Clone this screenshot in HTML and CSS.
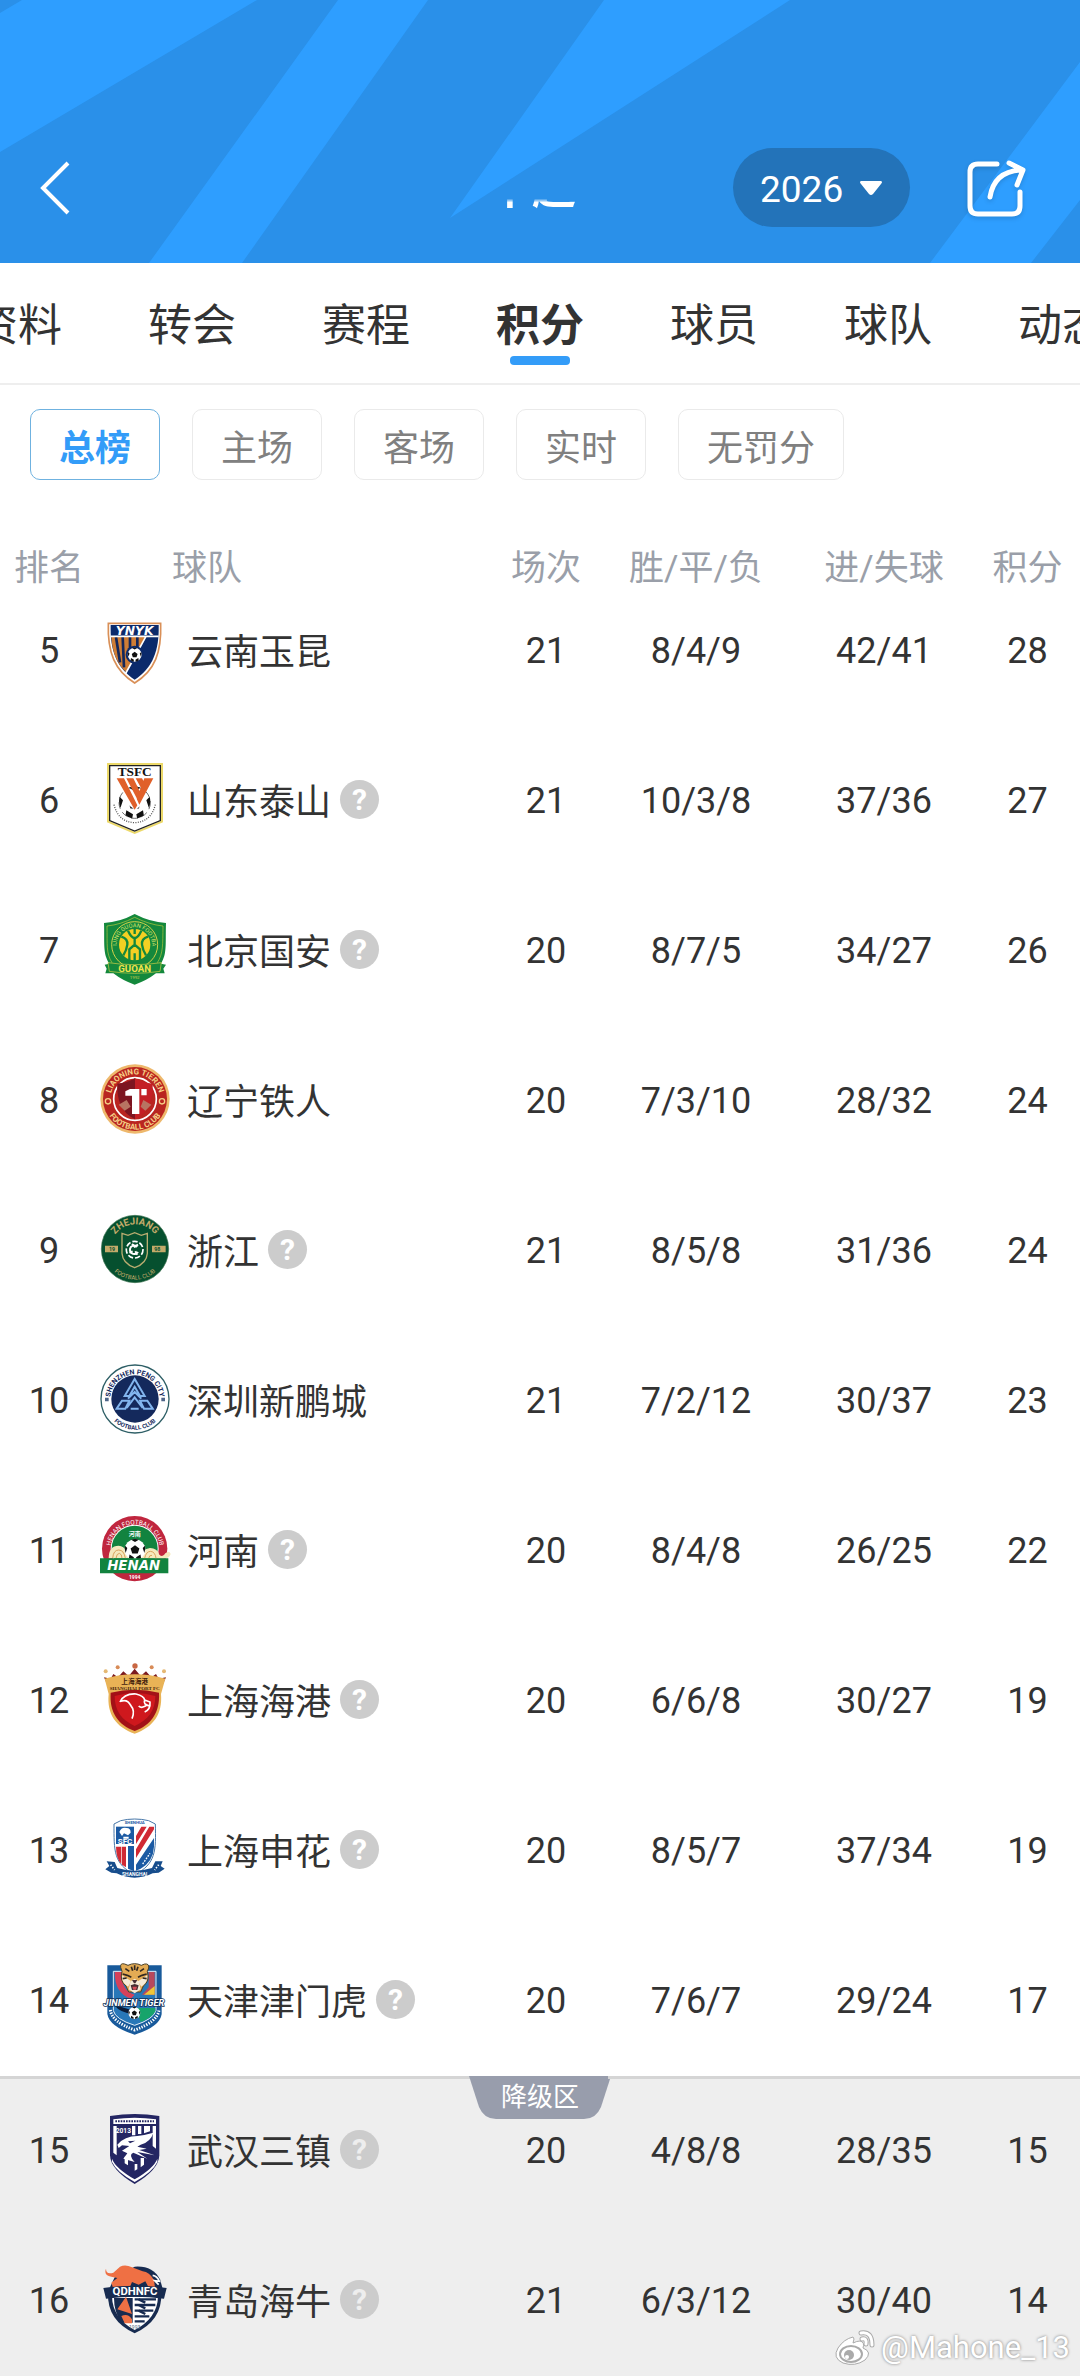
FILE: index.html
```html
<!DOCTYPE html>
<html lang="zh-CN">
<head>
    <meta charset="UTF-8">
    <meta name="viewport" content="width=device-width, initial-scale=1">
    <title>中超 积分</title>
    <link rel="stylesheet" href="styles.css">
</head>
<body>
    <!-- shared shapes for the club crests -->
    <svg class="defs" width="0" height="0" aria-hidden="true">
        <defs>
            <path id="arc-up" d="M31 105A74 74 0 0 1 179 105"/>
            <path id="arc-down" d="M13 105A92 92 0 0 0 197 105"/>
            <path id="arc-small" d="M50 93A53 53 0 1 1 156 93"/>
            <symbol id="ball" viewBox="0 0 40 40">
                <circle cx="20" cy="20" r="19" fill="#fff"/>
                <path fill="#111" d="M20 12l8 6-3 9H15l-3-9zM13 2l7 4 7-4a19 19 0 0 0-14 0zM2 13l4 4-3 9a19 19 0 0 1-1-13zM38 13l-4 4 3 9a19 19 0 0 0 1-13zM9 35l1-6 8 5-1 5a19 19 0 0 1-8-4zM31 35l-1-6-8 5 1 5a19 19 0 0 0 8-4z"/>
            </symbol>
        </defs>
    </svg>

    <header class="header">
        <svg class="header-bg" viewBox="0 0 1080 263" preserveAspectRatio="none" aria-hidden="true">
            <path d="M22 0H257L0 152V13zM338 0H428L242 263H149zM604 0H790L450 218zM1080 62V200L1031 263H930z"/>
        </svg>
        <a class="back" href="#" aria-label="返回">
            <svg width="32" height="56" viewBox="0 0 32 56"><path d="M30 3L5 28L30 53"/></svg>
        </a>
        <h1 class="title">中超</h1>
        <div class="header-right">
            <label class="season">
                <select aria-label="赛季">
                    <option>2026</option>
                </select>
                <svg width="24" height="16" viewBox="0 0 24 16"><path d="M2 1H22Q24 2 22 4L14 14Q12 16 10 14L2 4Q0 2 2 1z"/></svg>
            </label>
            <button class="share" type="button" aria-label="分享">
                <svg width="60" height="60" viewBox="0 0 60 60">
                    <path d="M31 6H12Q4 6 4 14V48Q4 56 12 56H46Q54 56 54 48V34M24 39Q28 14 54 12M43 5L57 12L51 27"/>
                </svg>
            </button>
        </div>
    </header>

    <nav class="tabs">
        <a href="#">资料</a>
        <a href="#">转会</a>
        <a href="#">赛程</a>
        <a href="#" class="active">积分</a>
        <a href="#">球员</a>
        <a href="#">球队</a>
        <a href="#">动态</a>
    </nav>

    <div class="filters">
        <button type="button" class="chip active">总榜</button>
        <button type="button" class="chip">主场</button>
        <button type="button" class="chip">客场</button>
        <button type="button" class="chip">实时</button>
        <button type="button" class="chip">无罚分</button>
    </div>

    <table class="standings">
        <thead>
            <tr>
                <th class="rank">排名</th>
                <th class="team">球队</th>
                <th class="played">场次</th>
                <th class="record">胜/平/负</th>
                <th class="goals">进/失球</th>
                <th class="points">积分</th>
            </tr>
        </thead>
        <tbody>
            <tr>
                <td>5</td>
                <td><div class="club">
                    <svg class="crest" viewBox="0 0 210 210">
                        <path d="M25 28H182C185 115 165 170 104 207C44 170 22 115 25 28z" fill="#fff" stroke="#d99058" stroke-width="5"/>
                        <path d="M32 33H176C178 110 158 162 104 197C50 162 30 110 32 33z" fill="#0b2a6b"/>
                        <path d="M34 69H136L78 174Q38 138 34 69z" fill="#cf7d35"/>
                        <path d="M48 69L60 145M68 69L72 160M90 69V135M112 69V105" stroke="#14275a" stroke-width="8" fill="none"/>
                        <path d="M32 67H176M138 67L76 180" stroke="#fff" stroke-width="5"/>
                        <text class="wide" x="104" y="62" font-size="37" font-weight="700" font-style="italic" fill="#fff">YNYK</text>
                        <circle cx="104" cy="122" r="27" fill="#0b2a6b"/>
                        <use href="#ball" x="82" y="100" width="44" height="44"/>
                    </svg>
                    <span>云南玉昆</span>
                </div></td>
                <td>21</td><td>8/4/9</td><td>42/41</td><td>28</td>
            </tr>
            <tr>
                <td>6</td>
                <td><div class="club">
                    <svg class="crest" viewBox="0 0 210 210">
                        <path d="M24 0H186V173L104 207L24 173z" fill="#fff" stroke="#ecd96a" stroke-width="6"/>
                        <path d="M29 5H181V170L104 201L29 170z" fill="#fff" stroke="#222" stroke-width="4"/>
                        <text class="serif" x="104" y="36" font-size="40" font-weight="700" fill="#111">TSFC</text>
                        <use href="#ball" x="54" y="66" width="100" height="100"/>
                        <circle cx="104" cy="116" r="47" fill="none" stroke="#222" stroke-width="2" stroke-dasharray="20 12"/>
                        <path d="M104 78L132 118L106 138L78 118z" fill="#fff"/>
                        <path d="M50 43H72L112 124L104 137zM79 43H100L122 88L111 104zM107 43H126L136 62L127 79zM133 43H160L118 122L110 104z" fill="#e0602a"/>
                        <path d="M42 122Q55 174 104 176Q153 174 166 122" fill="none" stroke="#555" stroke-width="4" stroke-dasharray="3 4"/>
                    </svg>
                    <span>山东泰山</span>
                    <button type="button" class="help" aria-label="说明">?</button>
                </div></td>
                <td>21</td><td>10/3/8</td><td>37/36</td><td>27</td>
            </tr>
            <tr>
                <td>7</td>
                <td><div class="club">
                    <svg class="crest" viewBox="0 0 210 210">
                        <path d="M104 0Q150 24 198 27C196 90 202 118 183 149L198 152L190 164L194 178L168 178Q140 200 104 212Q68 200 40 178L16 178L20 164L14 152L28 149C8 118 14 90 12 27Q60 24 104 0z" fill="#14883c"/>
                        <path d="M104 10Q148 32 189 36C188 92 190 118 172 146M36 146C18 118 22 92 21 36Q62 32 104 10" fill="none" stroke="#b9c840" stroke-width="2"/>
                        <circle cx="104" cy="92" r="69" fill="#14883c" stroke="#d2d149" stroke-width="3"/>
                        <circle cx="104" cy="92" r="47" fill="#f4d023"/>
                        <path d="M104 45V60M84 50Q94 72 104 72Q114 72 124 50M104 72V92L88 106V138M104 92L120 106V138M64 68Q84 74 82 92Q80 108 70 124M144 68Q124 74 126 92Q128 108 138 124M104 118V140" fill="none" stroke="#14883c" stroke-width="7"/>
                        <text class="arc" font-size="17" fill="#dbe36a"><textPath href="#arc-small" startOffset="50%">BEIJING GUOAN FOOTBALL</textPath></text>
                        <path d="M24 146Q104 158 184 146L180 172Q104 184 28 172z" fill="#14883c" stroke="#d2d149" stroke-width="2"/>
                        <text x="104" y="173" font-size="29" font-weight="700" fill="#f1e34b">GUOAN</text>
                        <text x="104" y="194" font-size="13" fill="#d2d149">1992</text>
                    </svg>
                    <span>北京国安</span>
                    <button type="button" class="help" aria-label="说明">?</button>
                </div></td>
                <td>20</td><td>8/7/5</td><td>34/27</td><td>26</td>
            </tr>
            <tr>
                <td>8</td>
                <td><div class="club">
                    <svg class="crest" viewBox="0 0 210 210">
                        <circle cx="105" cy="105" r="104" fill="#eeb86c"/>
                        <circle cx="105" cy="105" r="96" fill="#b92520"/>
                        <circle cx="105" cy="105" r="64" fill="#b92520" stroke="#fff" stroke-width="5"/>
                        <path d="M105 43Q132 58 158 59C160 108 146 145 105 166C64 145 50 108 52 59Q80 58 105 43z" fill="#c41f25"/>
                        <path d="M105 43V166C64 145 50 108 52 59Q80 58 105 43z" fill="#7d1520"/>
                        <path d="M56 122L80 108L92 128L74 140zM154 122L130 108L122 128L136 140z" fill="#b87462"/>
                        <path d="M76 82L90 75H118V150H96V95H76zM124 75H140V94H124z" fill="#fff"/>
                        <text class="arc" font-size="24" font-weight="700" fill="#f5cf86"><textPath href="#arc-up" startOffset="50%">LIAONING TIEREN</textPath></text>
                        <text class="arc" font-size="24" font-weight="700" fill="#f5cf86"><textPath href="#arc-down" startOffset="50%">FOOTBALL CLUB</textPath></text>
                        <circle cx="24" cy="112" r="8" fill="none" stroke="#f5cf86" stroke-width="4"/>
                        <circle cx="186" cy="112" r="8" fill="none" stroke="#f5cf86" stroke-width="4"/>
                    </svg>
                    <span>辽宁铁人</span>
                </div></td>
                <td>20</td><td>7/3/10</td><td>28/32</td><td>24</td>
            </tr>
            <tr>
                <td>9</td>
                <td><div class="club">
                    <svg class="crest" viewBox="0 0 210 210">
                        <circle cx="105" cy="105" r="101" fill="#06502f" stroke="#3c7250" stroke-width="2"/>
                        <path d="M15 95H197V115H15z" fill="#c2aa6a"/>
                        <path d="M54 90H156V122H54z" fill="#06502f"/>
                        <path d="M66 58L84 64L104 56L124 64L142 58V118Q140 148 104 161Q68 148 66 118z" fill="#06502f" stroke="#b9ac70" stroke-width="4"/>
                        <circle cx="104" cy="107" r="25" fill="none" stroke="#fff" stroke-width="5" stroke-dasharray="16 6"/>
                        <path d="M112 98A13 13 0 1 0 114 114M96 90L104 98L114 92M88 116L98 112M112 122L106 112" fill="none" stroke="#fff" stroke-width="6"/>
                        <text class="arc" font-size="29" font-weight="700" fill="#c2aa6a"><textPath href="#arc-up" startOffset="50%">ZHEJIANG</textPath></text>
                        <text class="arc" font-size="18" fill="#c2aa6a"><textPath href="#arc-down" startOffset="50%">FOOTBALL CLUB</textPath></text>
                        <text x="36" y="111" font-size="16" font-weight="700" fill="#06502f">19</text>
                        <text x="172" y="111" font-size="16" font-weight="700" fill="#06502f">98</text>
                    </svg>
                    <span>浙江</span>
                    <button type="button" class="help" aria-label="说明">?</button>
                </div></td>
                <td>21</td><td>8/5/8</td><td>31/36</td><td>24</td>
            </tr>
            <tr>
                <td>10</td>
                <td><div class="club">
                    <svg class="crest" viewBox="0 0 210 210">
                        <circle cx="105" cy="105" r="102" fill="#fff" stroke="#2e5f66" stroke-width="4"/>
                        <circle cx="105" cy="105" r="71" fill="#14295c"/>
                        <path d="M104 45L74 96H88L104 68L120 96H134zM84 104L104 84L124 104M50 134L66 110H88L76 134zM158 134L142 110H120L132 134zM80 132L104 100L128 132M92 134H116" fill="none" stroke="#82b5ee" stroke-width="6"/>
                        <text class="arc" font-size="21" font-weight="700" fill="#14295c"><textPath href="#arc-up" startOffset="50%">SHENZHEN PENG CITY</textPath></text>
                        <text class="arc" font-size="18" font-weight="700" fill="#14295c"><textPath href="#arc-down" startOffset="50%">FOOTBALL CLUB</textPath></text>
                        <path d="M15 101H26V112H15zM184 101H195V112H184z" fill="#4e6588"/>
                    </svg>
                    <span>深圳新鹏城</span>
                </div></td>
                <td>21</td><td>7/2/12</td><td>30/37</td><td>23</td>
            </tr>
            <tr>
                <td>11</td>
                <td><div class="club">
                    <svg class="crest" viewBox="0 0 210 210">
                        <circle cx="104" cy="104" r="98" fill="#c0263e"/>
                        <circle cx="104" cy="104" r="72" fill="#fff"/>
                        <circle cx="104" cy="104" r="69" fill="#12833f"/>
                        <path d="M26 133Q26 95 56 95Q72 96 78 110L92 133zM118 133Q126 104 150 102Q172 102 178 122Q188 132 196 118Q208 108 212 120Q208 134 190 134z" fill="#f5e9bd"/>
                        <path d="M38 133Q40 108 56 108Q72 108 76 133M48 133Q50 118 58 118Q66 120 66 133M134 133Q138 112 152 112Q166 114 168 133M146 133Q148 122 156 124" fill="none" stroke="#d9a25a" stroke-width="3"/>
                        <use href="#ball" x="72" y="74" width="66" height="66"/>
                        <text class="arc" font-size="19" fill="#fff"><textPath href="#arc-up" startOffset="50%">HENAN FOOTBALL CLUB</textPath></text>
                        <text x="104" y="66" font-size="18" font-weight="700" fill="#fff">河南</text>
                        <path d="M0 133H205V178H0z" fill="#12833f"/>
                        <text class="wide" x="101" y="169" font-size="40" font-weight="700" font-style="italic" fill="#fff">HENAN</text>
                        <text x="104" y="195" font-size="15" font-weight="700" fill="#fff">1994</text>
                    </svg>
                    <span>河南</span>
                    <button type="button" class="help" aria-label="说明">?</button>
                </div></td>
                <td>20</td><td>8/4/8</td><td>26/25</td><td>22</td>
            </tr>
            <tr>
                <td>12</td>
                <td><div class="club">
                    <svg class="crest" viewBox="0 0 210 210">
                        <path d="M12 40L32 44L40 30L54 40L70 22L86 36L104 14L122 36L138 22L154 40L168 30L176 44L198 40L184 72H26z" fill="#7c1b1f"/>
                        <path d="M14 44Q104 18 196 44L183 90C188 150 160 190 104 209C48 190 20 150 26 90z" fill="#e9b356"/>
                        <path d="M32 86Q104 68 177 86C180 146 154 182 104 201C54 182 28 146 32 86z" fill="#a31117"/>
                        <path d="M44 96Q104 78 166 96C166 140 144 168 104 186C64 168 44 140 44 96z" fill="#cf181d"/>
                        <path d="M60 114Q72 88 108 90Q132 96 134 108L150 114Q152 136 134 144M62 112Q82 104 92 124Q106 140 96 164M116 126Q126 136 142 122M134 108Q128 122 150 126" fill="none" stroke="#fff" stroke-width="5"/>
                        <text x="104" y="59" font-size="20" font-weight="700" fill="#43210c">上海海港</text>
                        <text class="serif" x="104" y="79" font-size="15" font-weight="700" fill="#43210c">SHANGHAI PORT FC</text>
                        <circle cx="105" cy="6" r="8" fill="#c86743"/>
                        <circle cx="53" cy="10" r="6" fill="#d88b57"/>
                        <circle cx="155" cy="10" r="6" fill="#d88b57"/>
                        <circle cx="17" cy="22" r="6" fill="#e5b873"/>
                        <circle cx="192" cy="22" r="6" fill="#e5b873"/>
                    </svg>
                    <span>上海海港</span>
                    <button type="button" class="help" aria-label="说明">?</button>
                </div></td>
                <td>20</td><td>6/6/8</td><td>30/27</td><td>19</td>
            </tr>
            <tr>
                <td>13</td>
                <td><div class="club">
                    <svg class="crest" viewBox="0 0 210 210">
                        <path d="M42 30L62 20Q104 10 146 20L166 30C168 110 168 150 104 182C40 150 42 110 42 30z" fill="#fff" stroke="#4676a8" stroke-width="3"/>
                        <path d="M48 38H102V90H48z" fill="#1b5aa3"/>
                        <path d="M48 98H64V150Q48 132 48 98zM124 38H140L108 90V66zM148 38H162V46L108 132V106z" fill="#d02a34"/>
                        <path d="M84 96H102V172L84 164zM162 72V98Q160 142 122 164L108 170V152z" fill="#1b5aa3"/>
                        <path d="M66 98H78V160L66 152z" fill="#d02a34"/>
                        <path d="M58 54Q64 38 80 42Q92 42 92 56L84 64L72 58L66 66zM70 68H86V74H70z" fill="#fff"/>
                        <text x="75" y="91" font-size="24" font-weight="700" fill="#fff">SFC</text>
                        <text x="104" y="29" font-size="13" font-weight="700" fill="#1b5aa3">SHENHUA</text>
                        <path d="M128 150L150 118" stroke="#fff" stroke-width="4" stroke-dasharray="5 4"/>
                        <path d="M20 142L44 144L52 162Q104 178 156 162L166 142L188 142L182 156L194 164L176 176L158 178Q104 204 50 178L34 176L16 166L28 156z" fill="#174d8c"/>
                        <path d="M32 152L44 168M176 152L164 168" stroke="#fff" stroke-width="5" stroke-dasharray="4 5"/>
                        <text x="104" y="186" font-size="15" font-weight="700" fill="#fff">SHANGHAI</text>
                    </svg>
                    <span>上海申花</span>
                    <button type="button" class="help" aria-label="说明">?</button>
                </div></td>
                <td>20</td><td>8/5/7</td><td>37/34</td><td>19</td>
            </tr>
            <tr>
                <td>14</td>
                <td><div class="club">
                    <svg class="crest" viewBox="0 0 210 210">
                        <path d="M22 4H185V150Q180 188 104 212Q28 188 22 150z" fill="#185a9b"/>
                        <path d="M40 22H168V140Q160 166 104 184Q46 166 40 140z" fill="#2877b8" stroke="#e5eff8" stroke-width="3"/>
                        <path d="M44 24H66Q62 80 104 92L92 104Q44 88 44 24z" fill="#d6405a"/>
                        <path d="M164 24H146V70L126 92H164z" fill="#b8485c"/>
                        <path d="M164 66L132 92H164z" fill="#efc638"/>
                        <path d="M108 132H166V142Q156 162 122 174z" fill="#17a46b"/>
                        <path d="M42 122L94 138L98 148Q62 148 42 122z" fill="#0a1b38"/>
                        <path d="M62 10Q60 -4 74 0L84 4Q104 -6 124 4L134 0Q148 -2 146 12L142 22Q150 52 130 66L122 84H86L78 66Q58 52 66 22z" fill="#e3ab54" stroke="#4b4028" stroke-width="3"/>
                        <path d="M66 34Q64 56 84 68L94 52zM142 34Q144 56 124 68L114 52zM92 52L104 44L116 52L122 76L104 88L86 76z" fill="#f5ead7"/>
                        <path d="M76 14L88 22M132 14L120 22M104 4V18M94 8L98 20M114 8L110 20M68 30L82 34M140 30L126 34M68 44L80 42M140 44L128 42M82 34L94 40M126 34L114 40" stroke="#302721" stroke-width="5"/>
                        <path d="M96 48H112L106 58H102zM92 64L104 60L116 64L112 78H96z" fill="#472f32"/>
                        <path d="M97 68H111L108 77H100z" fill="#d34d58"/>
                        <text x="102" y="126" font-size="28" font-weight="700" font-style="italic" fill="#fff" stroke="#16335a" stroke-width="5" paint-order="stroke">JINMEN TIGER</text>
                        <use href="#ball" x="84" y="128" width="38" height="38"/>
                        <path d="M31 138Q36 174 104 198Q172 174 177 138" fill="none" stroke="#fff" stroke-width="9" stroke-dasharray="4 4"/>
                    </svg>
                    <span>天津津门虎</span>
                    <button type="button" class="help" aria-label="说明">?</button>
                </div></td>
                <td>20</td><td>7/6/7</td><td>29/24</td><td>17</td>
            </tr>
        </tbody>
        <tbody class="relegation">
            <tr>
                <td>15</td>
                <td><div class="club">
                    <svg class="crest" viewBox="0 0 210 210">
                        <path d="M30 6Q104 -6 178 6V124Q176 168 104 210Q32 168 30 124z" fill="#242663"/>
                        <path d="M40 16Q104 6 168 16V30H40zM40 36H50V124L40 116zM158 36H168V104L158 96zM96 36H106V64H96zM114 36H124V60H114zM132 36H150V52L132 58zM74 128H84V154L74 148zM104 150H112V166L104 170zM122 132H132V152L122 160z" fill="#fff"/>
                        <path d="M52 92Q74 66 112 66Q132 64 160 56Q152 84 122 92L112 98L140 104L118 108L164 124L112 114L142 134L100 116Q84 122 104 144L70 134L82 118L66 110L88 96L66 94L56 102z" fill="#fff"/>
                        <path d="M84 82L106 80L90 88z" fill="#242663"/>
                        <path d="M36 134Q46 162 104 196Q162 162 172 134V144Q158 174 104 204Q50 174 36 144z" fill="#fff"/>
                        <path d="M46 22H162" stroke="#242663" stroke-width="6" stroke-dasharray="5 3"/>
                        <text x="70" y="58" font-size="20" font-weight="700" fill="#fff">2013</text>
                    </svg>
                    <span>武汉三镇</span>
                    <button type="button" class="help" aria-label="说明">?</button>
                </div></td>
                <td><span class="zone">降级区</span>20</td><td>4/8/8</td><td>28/35</td><td>15</td>
            </tr>
            <tr>
                <td>16</td>
                <td><div class="club">
                    <svg class="crest" viewBox="0 0 210 210">
                        <path d="M104 8Q158 4 180 46L188 74H28L44 40Z" fill="#172b50"/>
                        <path d="M24 90H184Q186 170 104 208Q22 170 24 90z" fill="#172b50"/>
                        <path d="M36 98H174Q172 162 104 198Q38 162 36 98z" fill="#fff"/>
                        <path d="M42 102H98V176H64Q42 146 42 102z" fill="#172b50"/>
                        <path d="M52 136L78 98L96 150zM64 156Q84 146 96 166V178H74z" fill="#ef7044"/>
                        <path d="M104 106H168M104 123H166M104 140H160M104 157H148M104 172H134" stroke="#172b50" stroke-width="7"/>
                        <path d="M116 106L136 116M116 123L136 133M116 140L136 150" stroke="#172b50" stroke-width="7"/>
                        <path d="M18 14Q18 32 40 26L60 8Q76 0 96 10L128 22Q148 24 162 48L166 80L148 74L136 52L116 62L96 54L86 78L40 74L34 56L52 42L34 38Q10 34 18 14z" fill="#ef7044"/>
                        <path d="M158 34Q172 36 178 52L164 50L176 62" fill="none" stroke="#fff" stroke-width="5"/>
                        <path d="M10 72Q104 58 200 72L192 104Q104 92 18 104z" fill="#172b50"/>
                        <text x="105" y="94" font-size="34" font-weight="700" fill="#fff">QDHNFC</text>
                        <text x="104" y="195" font-size="15" fill="#526782">1993</text>
                    </svg>
                    <span>青岛海牛</span>
                    <button type="button" class="help" aria-label="说明">?</button>
                </div></td>
                <td>21</td><td>6/3/12</td><td>30/40</td><td>14</td>
            </tr>
        </tbody>
    </table>

    <div class="watermark">
        <svg width="40" height="36" viewBox="0 0 40 36">
            <path d="M18 7Q9 9 3 18Q-3 28 8 33Q20 37 30 30Q38 22 28 18Q30 12 25 11Q22 11 18 13Q20 8 18 7z" fill="#fff" stroke="#aaa"/>
            <ellipse cx="16" cy="24" rx="11" ry="8" fill="#fff" stroke="#aaa" stroke-width="2"/>
            <circle cx="14" cy="25" r="5" fill="#aaa"/>
            <circle cx="12" cy="27" r="2" fill="#fff"/>
            <path d="M26 3Q37 1 37 15M27 9Q32 8 31 14" fill="none" stroke="#aaa" stroke-width="5" stroke-linecap="round"/>
            <path d="M26 3Q37 1 37 15M27 9Q32 8 31 14" fill="none" stroke="#fff" stroke-width="3" stroke-linecap="round"/>
        </svg>
        <span>@Mahone_13</span>
    </div>
</body>
</html>
```
FILE: styles.css
```css
* {
    box-sizing: border-box;
}
body {
    margin: 0;
    position: relative;
    background-color: #fff;
    color: #333;
    font-family: Roboto, "Noto Sans CJK SC", sans-serif;
    font-size: 36px;
    overflow-x: hidden;
}
a {
    color: inherit;
    text-decoration: none;
}
button, select {
    font-family: inherit;
    cursor: pointer;
}
.defs {
    position: absolute;
}

/* header */
.header {
    position: relative;
    display: grid;
    grid-template-columns: 1fr auto 1fr;
    align-items: center;
    padding: 148px 54px 36px 38px;
    background-color: #2a90e9;
    color: #fff;
}
.header-bg {
    position: absolute;
    top: 0;
    left: 0;
    width: 100%;
    height: 100%;
    fill: #2e9eff;
}
.back, .title, .header-right {
    position: relative;
}
.back svg, .share svg {
    display: block;
    fill: none;
    stroke: #fff;
    stroke-width: 4;
}
.share svg {
    stroke-width: 5;
    stroke-linecap: round;
    stroke-linejoin: round;
    filter: drop-shadow(0 2px 2px rgba(0,0,0,0.15));
}
/* the title is only lit along its lower edge */
.title {
    margin: 0;
    padding-top: 4px;
    font-size: 44px;
    line-height: 75px;
    color: transparent;
    background: linear-gradient(transparent 64%, #fff 69%);
    -webkit-background-clip: text;
    background-clip: text;
}
.header-right {
    display: flex;
    align-items: center;
    justify-content: flex-end;
    gap: 56px;
}
.season {
    display: flex;
    align-items: center;
    gap: 15px;
    height: 79px;
    padding: 0 27px;
    border-radius: 40px;
    background-color: #2373b9;
}
.season select {
    appearance: none;
    padding: 3px 0 0;
    border: none;
    background: none;
    color: #fff;
    font-size: 37px;
}
.season svg {
    fill: #fff;
}
.share {
    padding: 0;
    border: none;
    background: none;
}

/* tabs */
.tabs {
    display: flex;
    justify-content: center;
    overflow: hidden;
    border-bottom: 2px solid #eee;
}
.tabs a {
    flex: 0 0 174px;
    height: 120px;
    padding-top: 33px;
    text-align: center;
    font-size: 44px;
    line-height: 60px;
}
.tabs .active {
    font-weight: 700;
}
.tabs .active::after {
    content: "";
    display: block;
    width: 60px;
    height: 9px;
    margin: 0 auto;
    border-radius: 4px;
    background-color: #339cf8;
}

/* filters */
.filters {
    display: flex;
    gap: 32px;
    padding: 24px 30px 0;
}
.chip {
    height: 71px;
    padding: 0 28px;
    border: 1px solid #eaeaea;
    border-radius: 10px;
    background-color: #fff;
    color: #808080;
    font-size: 36px;
}
.chip.active {
    border-color: #6fb2e0;
    color: #339cf8;
    font-weight: 700;
}

/* standings */
.standings {
    width: 100%;
    table-layout: fixed;
    border-collapse: collapse;
    text-align: center;
}
th {
    height: 96px;
    padding: 0;
    vertical-align: bottom;
    color: #9a9fa9;
    font-size: 35px;
    font-weight: 400;
    line-height: 14px;
    white-space: nowrap;
}
td {
    position: relative;
    height: 150px;
    padding: 0;
    font-size: 36px;
}
.rank {
    width: 98px;
}
th.team {
    padding-left: 74px;
    text-align: left;
}
.played {
    width: 124px;
}
.record {
    width: 176px;
}
.goals {
    width: 200px;
}
.points {
    width: 96px;
}
th:last-child, td:last-child {
    padding-right: 9px;
}
.club {
    display: flex;
    align-items: center;
    padding-left: 2px;
    padding-bottom: 4px;
    font-size: 36px;
    white-space: nowrap;
}
.crest {
    flex: none;
    width: 70px;
    height: 70px;
    margin-right: 17px;
    overflow: visible;
}
.crest text {
    text-anchor: middle;
}
.crest .serif {
    font-family: "Liberation Serif", "Noto Sans CJK SC", serif;
}
.crest .wide {
    font-family: "DejaVu Sans", sans-serif;
}
.help {
    width: 39px;
    height: 39px;
    margin-left: 9px;
    padding: 0;
    border: none;
    border-radius: 50%;
    background-color: #ccc;
    color: #fff;
    font-size: 30px;
    font-weight: 700;
    line-height: 39px;
}
.relegation {
    background-color: #eee;
}
.relegation tr:first-child td {
    box-shadow: inset 0 3px #d5d5d5;
}
.relegation .help {
    color: #eee;
}
.zone {
    position: absolute;
    top: 0;
    left: 50%;
    width: 142px;
    height: 43px;
    margin-left: -77px;
    background-color: #989dac;
    clip-path: path("M0 0H142L132 31Q127 43 115 43H27Q15 43 10 31z");
    color: #fff;
    font-size: 26px;
    line-height: 43px;
}

.watermark {
    position: absolute;
    right: 10px;
    bottom: 10px;
    display: flex;
    align-items: center;
    gap: 6px;
    color: #fff;
    font-size: 31px;
    text-shadow: 0 0 3px rgba(0,0,0,0.5);
}
```
